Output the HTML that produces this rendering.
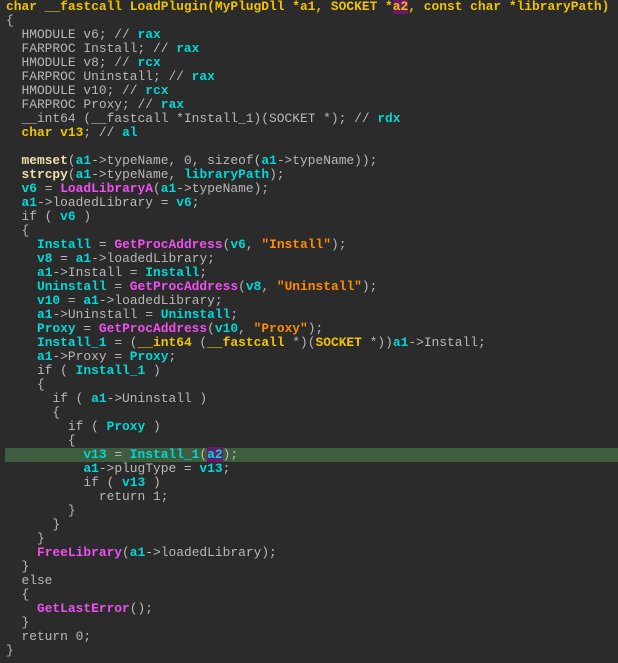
<!DOCTYPE html><html><head><style>
body{margin:0;background:#2b2b2b;width:618px;height:663px;overflow:hidden}
pre{margin:0;padding:0 0 0 6px;font-family:"Liberation Mono",monospace;font-size:12.9px;line-height:14px;color:#b8b8b8;position:relative}
.y{color:#f0c400;font-weight:bold}.c{color:#00d8d8;font-weight:bold}.m{color:#f050f0;font-weight:bold}.o{color:#ff8c00;font-weight:bold}.f{color:#f0e0a8;font-weight:bold}
.hl{position:absolute;left:5px;top:448px;width:613px;height:14px;background:#3e5c3e}
.p{background:#6a1a6a}
</style></head><body><div class="hl"></div><pre><span class="y">char __fastcall LoadPlugin(MyPlugDll *a1, SOCKET *<span class="p">a2</span>, const char *libraryPath)</span>
{
  HMODULE v6; // <span class="c">rax</span>
  FARPROC Install; // <span class="c">rax</span>
  HMODULE v8; // <span class="c">rcx</span>
  FARPROC Uninstall; // <span class="c">rax</span>
  HMODULE v10; // <span class="c">rcx</span>
  FARPROC Proxy; // <span class="c">rax</span>
  __int64 (__fastcall *Install_1)(SOCKET *); // <span class="c">rdx</span>
  <span class="y">char v13</span>; // <span class="c">al</span>

  <span class="f">memset</span>(<span class="c">a1</span>-&gt;typeName, 0, sizeof(<span class="c">a1</span>-&gt;typeName));
  <span class="f">strcpy</span>(<span class="c">a1</span>-&gt;typeName, <span class="c">libraryPath</span>);
  <span class="c">v6</span> = <span class="m">LoadLibraryA</span>(<span class="c">a1</span>-&gt;typeName);
  <span class="c">a1</span>-&gt;loadedLibrary = <span class="c">v6</span>;
  if ( <span class="c">v6</span> )
  {
    <span class="c">Install</span> = <span class="m">GetProcAddress</span>(<span class="c">v6</span>, <span class="o">"Install"</span>);
    <span class="c">v8</span> = <span class="c">a1</span>-&gt;loadedLibrary;
    <span class="c">a1</span>-&gt;Install = <span class="c">Install</span>;
    <span class="c">Uninstall</span> = <span class="m">GetProcAddress</span>(<span class="c">v8</span>, <span class="o">"Uninstall"</span>);
    <span class="c">v10</span> = <span class="c">a1</span>-&gt;loadedLibrary;
    <span class="c">a1</span>-&gt;Uninstall = <span class="c">Uninstall</span>;
    <span class="c">Proxy</span> = <span class="m">GetProcAddress</span>(<span class="c">v10</span>, <span class="o">"Proxy"</span>);
    <span class="c">Install_1</span> = (<span class="y">__int64</span> (<span class="y">__fastcall</span> *)(<span class="y">SOCKET</span> *))<span class="c">a1</span>-&gt;Install;
    <span class="c">a1</span>-&gt;Proxy = <span class="c">Proxy</span>;
    if ( <span class="c">Install_1</span> )
    {
      if ( <span class="c">a1</span>-&gt;Uninstall )
      {
        if ( <span class="c">Proxy</span> )
        {
          <span class="c">v13</span> = <span class="c">Install_1</span>(<span class="c p">a2</span>);
          <span class="c">a1</span>-&gt;plugType = <span class="c">v13</span>;
          if ( <span class="c">v13</span> )
            return 1;
        }
      }
    }
    <span class="m">FreeLibrary</span>(<span class="c">a1</span>-&gt;loadedLibrary);
  }
  else
  {
    <span class="m">GetLastError</span>();
  }
  return 0;
}</pre></body></html>
